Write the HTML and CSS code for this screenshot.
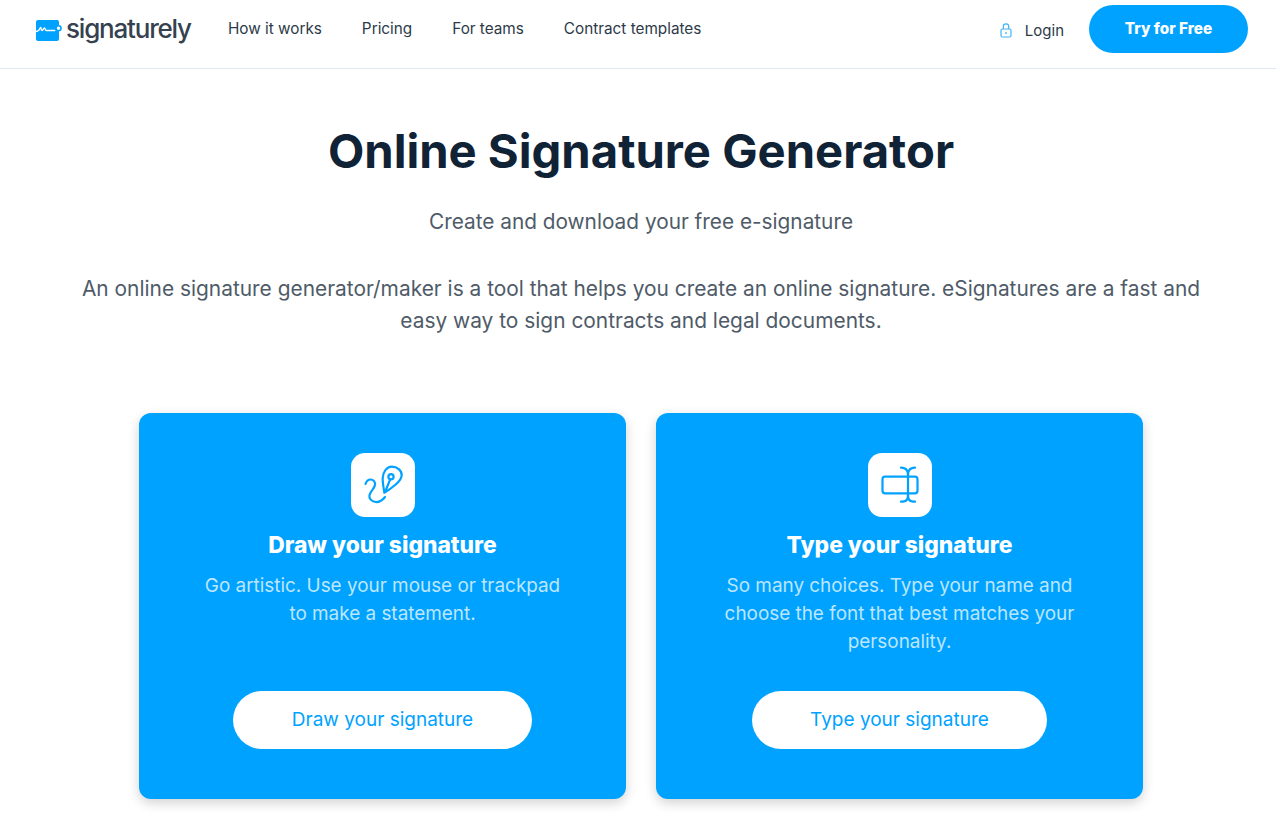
FILE: index.html
```html
<!DOCTYPE html>
<html lang="en">
<head>
    <meta charset="UTF-8">
    <meta name="viewport" content="width=device-width, initial-scale=1.0">
    <link rel="stylesheet" href="styles.css">
    <title>Online Signature Generator</title>
</head>
<body>
    <header class="topbar">
        <a class="logo" href="#">
            <svg class="logo-mark" width="32" height="24" viewBox="0 0 32 24">
                <rect x="5" y="1" width="23" height="21" rx="2" fill="#00a2ff"/>
                <path d="M2 11.500c2 1.200 4.500 1 6-.5.800-.8 1.200-2.500 1.700-2.500.7 0 .1 3 1.300 3 1.200 0 1.500-2.500 2.500-2.500.9 0 .5 2.500 1.800 2.500h8.500" fill="none" stroke="#fff" stroke-width="1.400" stroke-linecap="round"/>
                <circle cx="27.500" cy="9.300" r="2.500" fill="#fff" stroke="#00a2ff" stroke-width="1.600"/>
            </svg>
            <span class="logo-text">signaturely</span>
        </a>
        <nav class="main-nav">
            <a href="#">How it works</a>
            <a href="#">Pricing</a>
            <a href="#">For teams</a>
            <a href="#">Contract templates</a>
        </nav>
        <div class="account">
            <a class="login" href="#">
                <svg width="12" height="15" viewBox="0 0 12 15" fill="none" stroke="#3fb4f7" stroke-width="1.200">
                    <rect x="1" y="6" width="10" height="8" rx="1.500"/>
                    <path d="M3.300 6v-2.500a2.700 2.700 0 0 1 5.400 0v2.500"/>
                    <circle cx="6" cy="10" r=".9" fill="#3fb4f7" stroke="none"/>
                </svg>
                Login
            </a>
            <a class="try-btn" href="#">Try for Free</a>
        </div>
    </header>

    <main class="page">
        <h1>Online Signature Generator</h1>
        <p class="subtitle">Create and download your free e-signature</p>
        <p class="intro">An online signature generator/maker is a tool that helps you create an online signature. eSignatures are a fast and easy way to sign contracts and legal documents.</p>

        <div class="cards">
            <section class="card">
                <div class="card-icon">
                    <svg width="64" height="64" viewBox="0 0 64 64" fill="none" stroke="#00a2ff" stroke-width="2.200" stroke-linecap="round" stroke-linejoin="round">
                        <path d="M14.500 31c1-3 3-4.500 5-4.500 3 0 5 2.500 4.500 5.500-.6 3.500-4.500 6-5.500 10-.8 3.500 2 6.500 6 7 3.500.4 7-1.800 9.500-5"/>
                        <path d="M33.300 39.700c-.6-5-1.800-9.700-1.600-14.700.2-6 4-11.300 9-11.300 5.500 0 10 3.700 10 8.300 0 3.500-2.500 6.500-6 9.500-3.700 3.200-7.500 6-11.400 8.200z"/>
                        <circle cx="40" cy="23.700" r="2.600"/>
                        <path d="M39.200 26.400l-4.700 11.600"/>
                    </svg>
                </div>
                <h2>Draw your signature</h2>
                <p class="card-text">Go artistic. Use your mouse or trackpad<br>to make a statement.</p>
                <a class="card-btn draw-btn" href="#">Draw your signature</a>
            </section>
            <section class="card">
                <div class="card-icon">
                    <svg width="64" height="64" viewBox="0 0 64 64" fill="none" stroke="#00a2ff" stroke-width="2.200" stroke-linecap="round" stroke-linejoin="round">
                        <rect x="14.500" y="23.700" width="35" height="16.600" rx="2.500"/>
                        <path d="M33 14.700c2.500 0 4.500.8 5.700 2.300 1 1.300 1.300 3 1.300 5v20c0 2-.3 3.700-1.300 5-1.200 1.500-3.200 1.700-5.700 1.700"/>
                        <path d="M47 14.700c-2.500 0-4.500.8-5.700 2.300-1 1.300-1.300 3-1.300 5M40 42c0 2 .3 3.700 1.300 5 1.200 1.500 3.200 1.700 5.700 1.700"/>
                    </svg>
                </div>
                <h2>Type your signature</h2>
                <p class="card-text">So many choices. Type your name and choose the font that best matches your personality.</p>
                <a class="card-btn type-btn" href="#">Type your signature</a>
            </section>
        </div>
    </main>
</body>
</html>
```

FILE: styles.css
```css
* {
    box-sizing: border-box;
}

html, body {
    height: 820px;
    overflow: hidden;
}

body {
    margin: 0;
    background: #fff;
    color: #0f2236;
    font-family: 'Inter', 'Open Sans', sans-serif;
}

a {
    text-decoration: none;
    color: inherit;
}

.topbar {
    display: flex;
    align-items: center;
    height: 69px;
    padding: 0 28px 11px 31px;
    border-bottom: 1px solid #e2e8f0;
}

.logo {
    display: flex;
    align-items: center;
    gap: 3px;
    margin-right: 37px;
}

.logo-mark {
    margin-top: 4px;
}

.logo-text {
    font-size: 26px;
    letter-spacing: -1.2px;
    font-weight: 500;
    color: #35414f;
}

.main-nav {
    display: flex;
    gap: 40px;
    font-size: 15.3px;
    color: #2c3a49;
}

.account {
    display: flex;
    align-items: center;
    margin-left: auto;
}

.login {
    display: flex;
    align-items: center;
    gap: 13px;
    margin-top: 4px;
    margin-right: 25px;
    font-size: 15px;
    color: #2c3a49;
}

.try-btn {
    display: flex;
    align-items: center;
    justify-content: center;
    width: 159px;
    height: 48px;
    border-radius: 24px;
    background: #00a2ff;
    color: #fff;
    font-weight: 800;
    font-size: 15.3px;
}

.page {
    display: flex;
    flex-direction: column;
    align-items: center;
    padding: 52px 0 0 6px;
}

h1 {
    margin: 0;
    font-size: 47.2px;
    line-height: 60px;
    font-weight: 700;
    color: #0f2236;
}

.subtitle {
    margin: 25px 0 0;
    font-size: 20.8px;
    line-height: 32px;
    color: #4f5b68;
}

.intro {
    width: 1130px;
    margin: 35px 0 0;
    font-size: 20.9px;
    line-height: 32px;
    text-align: center;
    color: #4f5b68;
}

.cards {
    display: flex;
    gap: 30px;
    margin-top: 76px;
}

.card {
    position: relative;
    display: flex;
    flex-direction: column;
    align-items: center;
    width: 487px;
    height: 386px;
    padding-top: 40px;
    border-radius: 12px;
    background: #00a2ff;
    box-shadow: 0 4px 12px rgba(0, 0, 0, 0.18);
}

.card-icon {
    width: 64px;
    height: 64px;
    border-radius: 14px;
    background: #fff;
}

.card-icon svg {
    display: block;
}

.card h2 {
    margin: 12px 0 0;
    font-size: 22.8px;
    line-height: 32px;
    font-weight: 800;
    color: #fff;
}

.card-text {
    width: 375px;
    margin: 11px 0 0;
    font-size: 18.9px;
    line-height: 28px;
    text-align: center;
    color: #bde6ff;
}

.card-btn {
    position: absolute;
    bottom: 50px;
    display: flex;
    align-items: center;
    justify-content: center;
    height: 58px;
    padding-bottom: 2px;
    border-radius: 29px;
    background: #fff;
    color: #00a2ff;
    font-size: 19px;
}

.draw-btn {
    width: 299px;
}

.type-btn {
    width: 295px;
}
```
